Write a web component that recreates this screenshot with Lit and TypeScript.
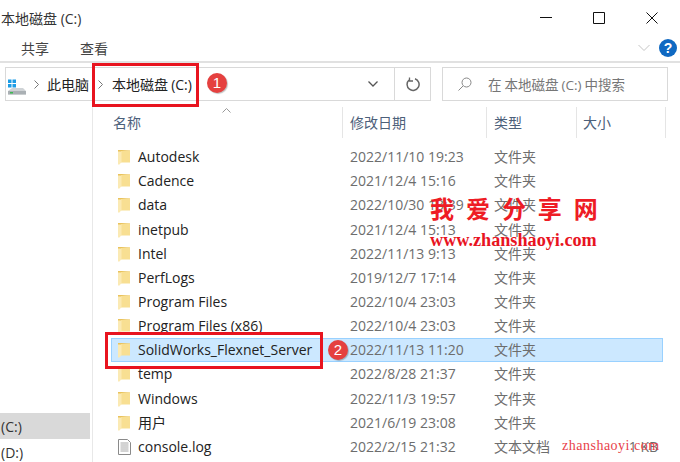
import { LitElement, html, css, svg } from "lit";
import { customElement } from "lit/decorators.js";

const rows = [
  ["Autodesk", "2022/11/10 19:23", "文件夹", ""],
  ["Cadence", "2021/12/4 15:16", "文件夹", ""],
  ["data", "2022/10/30 13:39", "文件夹", ""],
  ["inetpub", "2021/12/4 15:13", "文件夹", ""],
  ["Intel", "2022/11/13 9:13", "文件夹", ""],
  ["PerfLogs", "2019/12/7 17:14", "文件夹", ""],
  ["Program Files", "2022/10/4 23:03", "文件夹", ""],
  ["Program Files (x86)", "2022/10/4 23:03", "文件夹", ""],
  ["SolidWorks_Flexnet_Server", "2022/11/13 11:20", "文件夹", ""],
  ["temp", "2022/8/28 21:37", "文件夹", ""],
  ["Windows", "2022/11/3 19:57", "文件夹", ""],
  ["用户", "2021/6/19 23:08", "文件夹", ""],
  ["console.log", "2022/2/15 21:32", "文本文档", "1 KB"],
];

const folder = svg`<svg class="ico" width="12" height="16" viewBox="0 0 12 16">
  <path d="M0 1h4l8 .5V13H0z" fill="#e9c25c"/><path d="M3 2l9-.5V13.500H3z" fill="#f8df92"/><path d="M0 2.500h3.500V13L1.500 15.500H0z" fill="#fbeab4"/></svg>`;
const file = svg`<svg class="ico doc" width="13" height="16" viewBox="0 0 13 16">
  <path d="M.5 .5h9l3 3v12H.5z" fill="#fff" stroke="#8a8a8a"/>
  <path d="M2.500 4h8M2.500 6h8M2.500 8h8M2.500 10h8M2.500 12h8" stroke="#a8a8a8"/></svg>`;
const crumbA = svg`<svg class="crumb a" width="5" height="9" viewBox="0 0 5 9"><path d="M.5 .5l4 4-4 4" fill="none" stroke="#777"/></svg>`;
const crumbB = svg`<svg class="crumb b" width="5" height="9" viewBox="0 0 5 9"><path d="M.5 .5l4 4-4 4" fill="none" stroke="#777"/></svg>`;

@customElement("app-root")
export class AppRoot extends LitElement {
  static styles = css`
    :host { display: block; width: 680px; height: 462px; overflow: hidden; position: relative; background: #fff;
      font-family: "Open Sans", "Noto Sans CJK SC", sans-serif; font-size: 14px; color: #222; }
    .title { height: 35px; display: flex; align-items: center; padding-left: 1px; color: #333; }
    .title span { flex: 1; }
    .win { display: flex; gap: 41px; padding-right: 22px; }
    .ribbon { height: 26px; display: flex; align-items: center; padding-left: 21px; gap: 31px; color: #444; border-bottom: 2px solid #e1e1e1; }
    .ribbon .sp { flex: 1; }
    .ribbon .chev { margin-right: 6px; margin-left: -31px; }
    .help { width: 18px; height: 18px; margin-left: -28px; border-radius: 50%; background: #0f69c2; color: #fff; font: bold 14px/18px "Liberation Sans", sans-serif; text-align: center; margin-right: 3px; }
    .nav { height: 34px; margin: 4px 12px 0 5px; display: flex; gap: 11px; word-spacing: -.5px; }
    .addr { flex: 1; border: 1px solid #d9d9d9; display: flex; align-items: center; padding-left: 2px; color: #222; }
    .drive { margin-top: 5px; flex: none; }
    .crumb { flex: none; }
    .crumb.a { margin: 0 8px; }
    .crumb.b { margin: 0 9px 0 9px; }
    .grow { flex: 1; }
    .drop { width: 42px; display: flex; justify-content: center; }
    .refresh { width: 35px; height: 100%; border-left: 1px solid #d9d9d9; display: flex; align-items: center; justify-content: center; }
    .search { box-sizing: border-box; width: 226px; border: 1px solid #d9d9d9; display: flex; align-items: center; gap: 16px; padding-left: 15px; color: #767676; white-space: nowrap; font-size: 13.5px; }
    .main { display: flex; height: 361px; }
    .side { width: 92px; border-right: 1px solid #e8e8e8; display: flex; flex-direction: column; justify-content: flex-end; }
    .side div { height: 26px; line-height: 27px; padding-left: 1px; width: 89px; color: #333; }
    .side .on { background: #d9d9d9; }
    .side .off { height: 23px; line-height: 28px; }
    .list { flex: 1; position: relative; padding-left: 18px; }
    .head { height: 44px; display: grid; grid-template-columns: 232px 144px 90px 89px; align-content: start; color: #4c607a; }
    .head div { box-sizing: border-box; padding-left: 7px; height: 31px; line-height: 31px; border-right: 1px solid #e5e5e5; margin-top: 6px; }
    .head div:first-child { padding-left: 2px; }
    .head div:last-child { padding-left: 6px; }
    .sort { position: absolute; left: 129px; top: 7px; }
    .row { height: 24.17px; width: 552px; box-sizing: border-box; display: grid; grid-template-columns: 232px 144px 89px 85px; align-items: center; border: 1px solid transparent; color: #6d6d6d; line-height: 22px; }
    .row.sel { background: #cce8ff; border-color: #99d1ff; }
    .row .name { display: flex; align-items: center; gap: 8px; padding-left: 6px; color: #222; white-space: nowrap; }
    .row .d { padding-left: 6px; white-space: nowrap; }
    .row .t { padding-left: 6px; white-space: nowrap; }
    .row .s { padding-right: 4px; text-align: right; white-space: nowrap; }
    .ico { display: block; flex: none; }
    .doc { margin-right: -1px; }
    .box { position: absolute; border: 3px solid #e8141f; box-sizing: border-box; }
    .b1 { left: 92px; top: 63px; width: 107px; height: 44px; }
    .b2 { left: 105px; top: 332px; width: 218px; height: 37px; }
    .num { position: absolute; width: 20px; height: 20px; border-radius: 50%; background: #e5403f; color: #fff; font: 15px/20px "Liberation Sans", sans-serif; text-align: center; box-shadow: 1px 1px 1px rgba(0,0,0,.25); }
    .n1 { left: 207px; top: 73px; }
    .n2 { left: 328px; top: 340px; }
    .wm1 { position: absolute; left: 430px; top: 190px; font: bold 24px/36px "Noto Sans CJK SC", sans-serif; color: #ee1c25; word-spacing: 6.500px; white-space: nowrap; }
    .wm2 { position: absolute; left: 430px; top: 230px; font: bold 18.200px/20px "Liberation Serif", serif; color: #e8141f; white-space: nowrap; }
    .wm3 { position: absolute; left: 562px; top: 436px; font: 14px/20px "Liberation Serif", serif; color: #e8414a; white-space: nowrap; letter-spacing: .5px; }
  `;
  render() {
    return html`
      <div class="title"><span>本地磁盘 (C:)</span>
        <div class="win">
          <svg width="12" height="12" viewBox="0 0 12 12"><path d="M0 5.500h12" stroke="#111"/></svg>
          <svg width="12" height="12" viewBox="0 0 12 12"><path d="M.5 .5h11v11H.5z" fill="none" stroke="#111"/></svg>
          <svg width="12" height="12" viewBox="0 0 12 12"><path d="M.5 .5l11 11M11.500 .5l-11 11" stroke="#111"/></svg>
        </div>
      </div>
      <div class="ribbon"><span>共享</span><span>查看</span><span class="sp"></span>
        <svg class="chev" width="12" height="8" viewBox="0 0 12 8"><path d="M.5 1l5.500 5.500L11.500 1" fill="none" stroke="#c4c4c4"/></svg>
        <div class="help">?</div></div>
      <div class="nav">
        <div class="addr">
          <svg class="drive" width="18" height="16" viewBox="0 0 18 16"><path d="M0 .5h3.500v3.500H0zM4.500 .5H8V4H4.500zM0 5h3.500v3.500H0zM4.500 5H8v3.500H4.500z" fill="#1d9ce5"/><path d="M0 12l4-3h11l3 3v3.500H0z" fill="#cfd3d6"/><path d="M0 12h18v3.500H0z" fill="#aab0b4"/><path d="M2 13h3v1.500H2z" fill="#3dbb52"/></svg>
          ${crumbA}<span>此电脑</span>${crumbB}<span>本地磁盘 (C:)</span>
          <span class="grow"></span>
          <div class="drop"><svg width="10" height="6" viewBox="0 0 10 6"><path d="M.5 .5L5 5 9.500 .5" fill="none" stroke="#555" stroke-width="1.300"/></svg></div>
          <div class="refresh"><svg width="14" height="15" viewBox="0 0 14 15"><path d="M3 3a6 6 0 1 0 6-1.300" fill="none" stroke="#666" stroke-width="1.500"/><path d="M3.500 .5v3.500H7" fill="none" stroke="#666" stroke-width="1.300"/></svg></div>
        </div>
        <div class="search">
          <svg width="14" height="14" viewBox="0 0 14 14"><circle cx="8.500" cy="5.500" r="4.500" fill="none" stroke="#888"/><path d="M5 9l-4.500 4.500" stroke="#888"/></svg>
          <span>在 本地磁盘 (C:) 中搜索</span>
        </div>
      </div>
      <div class="main">
        <div class="side"><div class="on">(C:)</div><div class="off">(D:)</div></div>
        <div class="list">
          <svg class="sort" width="9" height="5" viewBox="0 0 9 5"><path d="M.5 4.500L4.500 .5l4 4" fill="none" stroke="#999"/></svg>
          <div class="head"><div>名称</div><div>修改日期</div><div>类型</div><div>大小</div></div>
          ${rows.map((r) => html`<div class="row ${r[0].startsWith("Solid") ? "sel" : ""}">
            <div class="name">${r[3] ? file : folder}<span>${r[0]}</span></div>
            <div class="d">${r[1]}</div><div class="t">${r[2]}</div><div class="s">${r[3]}</div></div>`)}
        </div>
      </div>
      <div class="box b1"></div><div class="box b2"></div>
      <div class="num n1">1</div><div class="num n2">2</div>
      <div class="wm1">我 爱 分 享 网</div>
      <div class="wm2">www.zhanshaoyi.com</div>
      <div class="wm3">zhanshaoyi.com</div>
    `;
  }
}
